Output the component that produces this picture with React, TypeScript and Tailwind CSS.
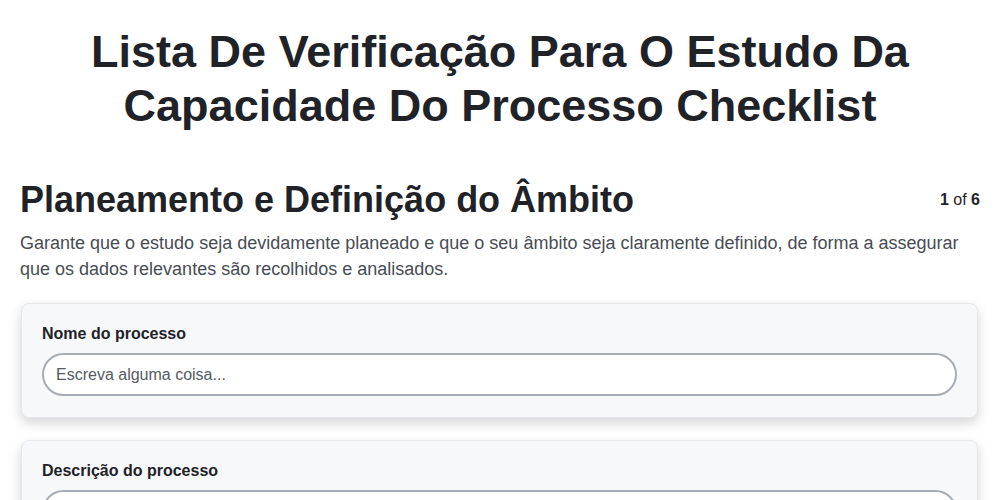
import React from "react";

function Field({ label }: { label: string }) {
  return (
    <div className="ml-px mr-[2px] rounded-lg border border-gray-200 bg-[#f7f8fa] px-5 pt-[20px] pb-[21px] shadow-[0_5px_12px_rgba(0,0,0,0.17)]">
      <label className="block text-[16px] font-bold leading-[20px] text-[#1f2328]">{label}</label>
      <input
        type="text"
        placeholder="Escreva alguma coisa..."
        className="mt-[9px] block h-[43px] w-full rounded-full border-2 border-[#a7adb5] bg-white px-3 text-[16px] text-[#1f2328] placeholder:text-[#555b62] outline-none"
      />
    </div>
  );
}

export default function App() {
  return (
    <div className="min-h-[500px] bg-white px-5 text-[#1f2328]" style={{ fontFamily: '"Liberation Sans", Arial, sans-serif' }}>
      <h1 className="mx-auto pt-[25px] text-center text-[45px] font-bold leading-[54px] text-[#1f2328]">
        Lista De Verificação Para O Estudo Da
        <br />
        Capacidade Do Processo Checklist
      </h1>
      <div className="mt-[45px] flex items-center justify-between">
        <h2 className="text-[36px] font-bold leading-[44px] text-[#1f2328]">Planeamento e Definição do Âmbito</h2>
        <div className="text-[16px] text-[#1f2328]">
          <span className="font-bold">1</span> of <span className="font-bold">6</span>
        </div>
      </div>
      <p className="mt-[8px] text-[18px] leading-[26px] text-[#474d55]">
        Garante que o estudo seja devidamente planeado e que o seu âmbito seja claramente definido, de forma a assegurar que os dados relevantes são recolhidos e analisados.
      </p>
      <div className="mt-[21px] flex flex-col gap-[22px] pb-10">
        <Field label="Nome do processo" />
        <Field label="Descrição do processo" />
      </div>
    </div>
  );
}
